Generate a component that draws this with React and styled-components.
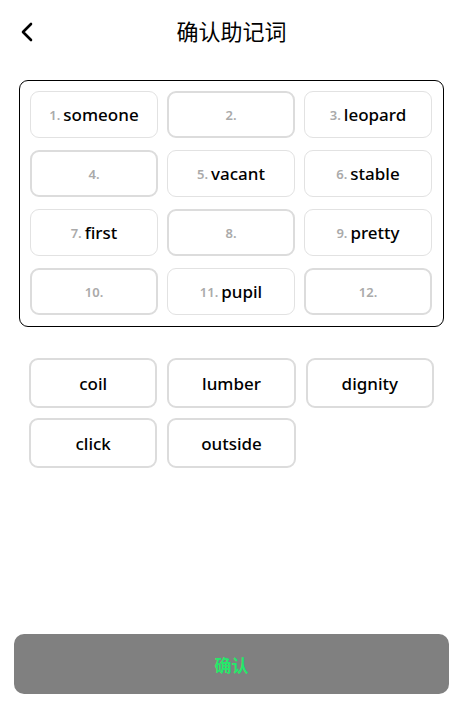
import React from "react";
import styled, { createGlobalStyle } from "styled-components";

const GlobalStyle = createGlobalStyle`
  html, body {
    margin: 0;
    padding: 0;
    background: #fff;
    font-family: "Noto Sans", "Noto Sans CJK SC", sans-serif;
  }
`;

const Page = styled.div`
  width: 463px;
  height: 707px;
  display: flex;
  flex-direction: column;
  box-sizing: border-box;
`;

const Header = styled.div`
  height: 66px;
  box-sizing: border-box;
  padding-bottom: 6px;
  display: flex;
  align-items: center;
  justify-content: center;
  position: relative;
`;

const BackButton = styled.button`
  position: absolute;
  left: 14px;
  top: 19px;
  width: 26px;
  height: 26px;
  border: 0;
  padding: 0;
  background: none;
  display: flex;
  align-items: center;
  justify-content: center;
`;

const Title = styled.h1`
  margin: 0;
  font-family: "Noto Sans CJK SC", sans-serif;
  font-size: 22px;
  font-weight: 400;
  color: #000;
`;

const Board = styled.div`
  margin: 14px 19px 0 19px;
  border: 1px solid #000;
  border-radius: 9px;
  padding: 10px 11px 11px 10px;
  display: grid;
  grid-template-columns: repeat(3, 1fr);
  column-gap: 9px;
  row-gap: 12px;
`;

const Slot = styled.div`
  height: 47px;
  box-sizing: border-box;
  border-radius: 9px;
  border: ${p => (p.empty ? "2px solid #dcdcdc" : "1px solid #e2e2e2")};
  display: flex;
  align-items: center;
  justify-content: center;
  gap: 3px;
`;

const Index = styled.span`
  font-size: 13px;
  font-weight: 600;
  color: #aaa;
`;

const Word = styled.span`
  font-size: 17px;
  font-weight: 500;
  color: #000;
`;

const Pool = styled.div`
  margin: 31px 29px 0 29px;
  display: grid;
  grid-template-columns: repeat(3, 1fr);
  column-gap: 10px;
  row-gap: 10px;
`;

const Chip = styled.button`
  height: 50px;
  box-sizing: border-box;
  border: 2px solid #dcdcdc;
  border-radius: 9px;
  background: #fff;
  font-family: "Noto Sans", sans-serif;
  font-size: 17px;
  font-weight: 500;
  color: #000;
  padding: 0;
`;

const Spacer = styled.div`
  flex: 1;
`;

const ConfirmButton = styled.button`
  margin: 0 14px 13px 14px;
  height: 60px;
  border: 0;
  border-radius: 10px;
  background: #808080;
  color: #25e86a;
  font-family: "Noto Sans CJK SC", sans-serif;
  font-size: 17px;
  font-weight: 700;
`;

const slots = [
  "someone", "", "leopard",
  "", "vacant", "stable",
  "first", "", "pretty",
  "", "pupil", "",
];

const pool = ["coil", "lumber", "dignity", "click", "outside"];

export default function App() {
  return (
    <Page>
      <GlobalStyle />
      <Header>
        <BackButton>
          <svg width="16" height="20" viewBox="0 0 16 20" fill="none">
            <path d="M12 2 L4 10 L12 18" stroke="#000" strokeWidth="2.6" strokeLinecap="round" strokeLinejoin="round" />
          </svg>
        </BackButton>
        <Title>确认助记词</Title>
      </Header>
      <Board>
        {slots.map((w, i) => (
          <Slot key={i} empty={!w}>
            <Index>{i + 1}.</Index>
            {w && <Word>{w}</Word>}
          </Slot>
        ))}
      </Board>
      <Pool>
        {pool.map(w => (
          <Chip key={w}>{w}</Chip>
        ))}
      </Pool>
      <Spacer />
      <ConfirmButton>确认</ConfirmButton>
    </Page>
  );
}
